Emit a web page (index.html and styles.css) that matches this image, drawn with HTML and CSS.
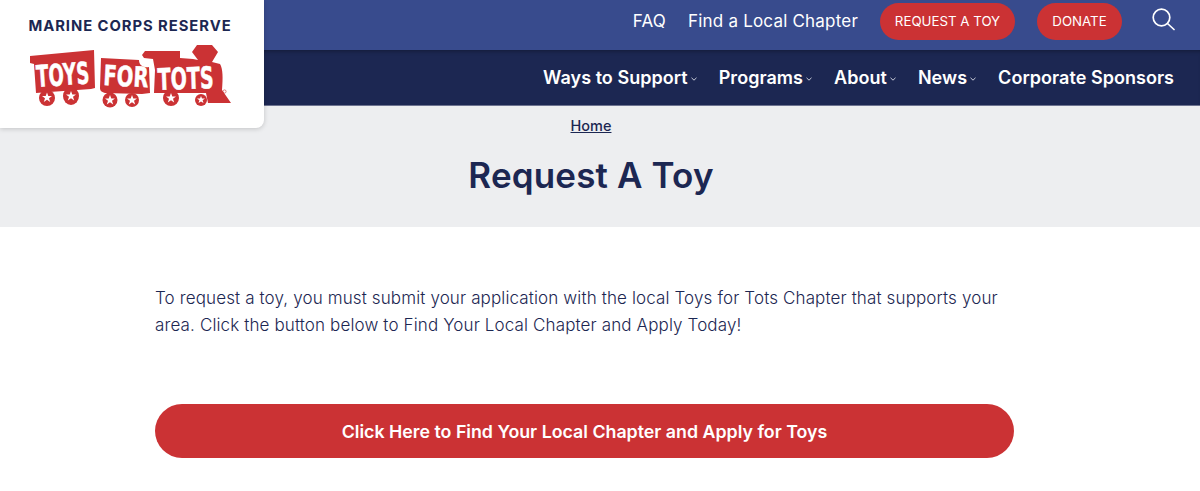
FILE: index.html
```html
<!DOCTYPE html>
<html lang="en">
<head>
<meta charset="utf-8">
<title>Request A Toy</title>
<link rel="stylesheet" href="styles.css">
</head>
<body>
<header class="site-header">
  <a class="brand" href="#">
    <span class="brand-title">MARINE CORPS RESERVE</span>
    <svg class="brand-logo" viewBox="29 43 204 64" width="204" height="64" role="img" aria-label="Toys for Tots">
      <g fill="#cb3234">
        <polygon points="30,56 94,50 95,88 91,89 36,93 34,64 30,63"/>
        <path d="M101,58 L139,60 C139,65 143,68 149,67 L150,93 L142,94 L105,93 C101,92 100,90 100,88 Z"/>
        <path d="M142,55 L145,51 L180,51 L180,58 L193,59 L198,60 L192,52 L197,45 L212,45 L218,52 L212,62 L220,64 C223,69 223,78 222,90 L231,103 L208,103 L206,93 L154,93 L155,70 L153,59 L144,58 Z"/>
        <circle cx="47" cy="98" r="8"/>
        <ellipse cx="71" cy="96" rx="8" ry="9"/>
        <circle cx="110" cy="100" r="7.500"/>
        <circle cx="132" cy="100" r="7"/>
        <circle cx="171" cy="98" r="8"/>
        <circle cx="201" cy="100" r="6"/>
      </g>
      <g fill="#fff">
        <text class="logo-word" transform="translate(37 87) rotate(-4)" textLength="53" lengthAdjust="spacingAndGlyphs">TOYS</text>
        <text class="logo-word logo-word-small" transform="translate(103 85) rotate(3)" textLength="45" lengthAdjust="spacingAndGlyphs">FOR</text>
        <text class="logo-word" transform="translate(158 90) rotate(-2)" textLength="56" lengthAdjust="spacingAndGlyphs">TOTS</text>
        <polygon points="47,92.500 48.300,96 52,96 49,98.200 50.200,102 47,99.700 43.800,102 45,98.200 42,96 45.700,96"/>
        <polygon points="71,91 72.300,94.500 76,94.500 73,96.700 74.200,100.500 71,98.200 67.800,100.500 69,96.700 66,94.500 69.700,94.500"/>
        <polygon points="110,95 111.300,98.500 115,98.500 112,100.700 113.200,104.500 110,102.200 106.800,104.500 108,100.700 105,98.500 108.700,98.500"/>
        <polygon points="132,95 133.300,98.500 137,98.500 134,100.700 135.200,104.500 132,102.200 128.800,104.500 130,100.700 127,98.500 130.700,98.500"/>
        <polygon points="171,93 172.300,96.500 176,96.500 173,98.700 174.200,102.500 171,100.200 167.800,102.500 169,98.700 166,96.500 169.700,96.500"/>
        <polygon points="201,96 202,98.500 205,98.500 202.600,100.300 203.500,103 201,101.400 198.500,103 199.400,100.300 197,98.500 200,98.500"/>
      </g>
      <circle cx="224.500" cy="91.500" r="1.600" fill="none" stroke="#cb3234" stroke-width=".6"/>
    </svg>
  </a>
  <div class="utility-bar">
    <a class="utility-link" href="#">FAQ</a>
    <a class="utility-link" href="#">Find a Local Chapter</a>
    <a class="pill-link pill-request" href="#">REQUEST A TOY</a>
    <a class="pill-link pill-donate" href="#">DONATE</a>
    <a class="search-link" href="#" aria-label="Search">
      <svg viewBox="0 0 23 23" width="23" height="23" fill="none" stroke="#fff" stroke-width="1.700" stroke-linecap="round">
        <circle cx="9.500" cy="9.500" r="8.300"/>
        <path d="M15.500 15.500 L22 21.500"/>
      </svg>
    </a>
  </div>
  <nav class="main-nav">
    <a class="nav-link has-caret" href="#">Ways to Support<svg class="caret" viewBox="0 0 6 4" width="6" height="4"><path d="M.5 .8 L3 3.200 L5.500 .8"/></svg></a>
    <a class="nav-link has-caret" href="#">Programs<svg class="caret" viewBox="0 0 6 4" width="6" height="4"><path d="M.5 .8 L3 3.200 L5.500 .8"/></svg></a>
    <a class="nav-link has-caret" href="#">About<svg class="caret" viewBox="0 0 6 4" width="6" height="4"><path d="M.5 .8 L3 3.200 L5.500 .8"/></svg></a>
    <a class="nav-link has-caret" href="#">News<svg class="caret" viewBox="0 0 6 4" width="6" height="4"><path d="M.5 .8 L3 3.200 L5.500 .8"/></svg></a>
    <a class="nav-link" href="#">Corporate Sponsors</a>
  </nav>
</header>
<section class="page-band">
  <div class="band-inner">
    <a class="crumb" href="#">Home</a>
    <h1 class="page-title">Request A Toy</h1>
  </div>
</section>
<main class="content">
  <p class="intro">To request a toy, you must submit your application with the local Toys for Tots Chapter that supports your area. Click the button below to Find Your Local Chapter and Apply Today!</p>
  <a class="cta" href="#">Click Here to Find Your Local Chapter and Apply for Toys</a>
</main>
</body>
</html>
```

FILE: styles.css
```css
* { box-sizing: border-box; }
html, body { margin: 0; padding: 0; }
body {
  font-family: Inter, Roboto, "Liberation Sans", sans-serif;
  color: #1c2752;
  background: #fff;
}
a { text-decoration: none; color: inherit; }

.site-header { position: relative; }

.brand {
  position: absolute;
  top: 0;
  left: 0;
  z-index: 2;
  width: 264px;
  height: 128px;
  background: #fff;
  border-bottom-right-radius: 8px;
  box-shadow: 0 1px 5px rgba(0, 0, 0, .18);
  display: flex;
  flex-direction: column;
  align-items: center;
  padding: 17px 4px 0 0;
}
.brand-title {
  font-size: 14.800px;
  line-height: 18px;
  font-weight: 700;
  letter-spacing: .95px;
  white-space: nowrap;
}
.brand-logo { display: block; margin-top: 8px; margin-left: 2px; overflow: visible; }
.logo-word {
  font-family: "Liberation Sans Narrow", "DejaVu Sans Condensed", "Liberation Sans", sans-serif;
  font-weight: 700;
  font-size: 30px;
  stroke: #fff;
  stroke-width: .5px;
}
.logo-word-small { font-size: 28px; }

.utility-bar {
  height: 50px;
  background: #384b8d;
  display: flex;
  align-items: center;
  justify-content: flex-end;
  padding: 0 25px 8px 0;
  color: #fff;
}
.utility-link {
  font-size: 17px;
  font-weight: 400;
  line-height: 24px;
  letter-spacing: .2px;
  margin-right: 22px;
}
.pill-link {
  height: 37px;
  border-radius: 19px;
  background: #cb3234;
  display: flex;
  align-items: center;
  justify-content: center;
  font-size: 13.300px;
  font-weight: 400;
}
.pill-request { width: 135px; margin-right: 22px; }
.pill-donate { width: 85px; margin-right: 30px; }
.search-link { display: block; height: 23px; width: 23px; margin-top: -4px; }
.search-link svg { display: block; }

.main-nav {
  height: 56px;
  background: #1c2752;
  border-bottom: 1px solid #6d7390;
  box-shadow: inset 0 4px 4px -3px rgba(0, 0, 0, .35);
  display: flex;
  align-items: center;
  justify-content: flex-end;
  gap: 22px;
  padding-right: 26px;
  color: #fff;
}
.nav-link {
  display: flex;
  align-items: center;
  font-size: 18px;
  font-weight: 600;
  line-height: 24px;
  letter-spacing: .04px;
  white-space: nowrap;
}
.caret { margin-left: 3px; margin-top: 3px; fill: none; stroke: #dfe2ea; stroke-width: .9; }

.page-band {
  height: 121px;
  background: #edeef0;
}
.band-inner {
  margin-left: 155px;
  width: 872px;
  display: flex;
  flex-direction: column;
  align-items: center;
  padding-top: 11px;
}
.crumb {
  font-size: 14.500px;
  line-height: 18px;
  font-weight: 500;
  text-decoration: underline;
}
.page-title {
  margin: 17px 0 0;
  font-size: 35px;
  line-height: 46px;
  font-weight: 600;
  letter-spacing: .15px;
}

.content {
  margin-left: 155px;
  width: 859px;
  padding-top: 58px;
}
.intro {
  margin: 0;
  font-size: 17px;
  line-height: 27px;
  font-weight: 300;
  letter-spacing: .13px;
}
.cta {
  margin-top: 65px;
  height: 54px;
  border-radius: 27px;
  background: #cb3234;
  color: #fff;
  display: flex;
  align-items: center;
  justify-content: center;
  font-size: 17.800px;
  font-weight: 600;
}
```
